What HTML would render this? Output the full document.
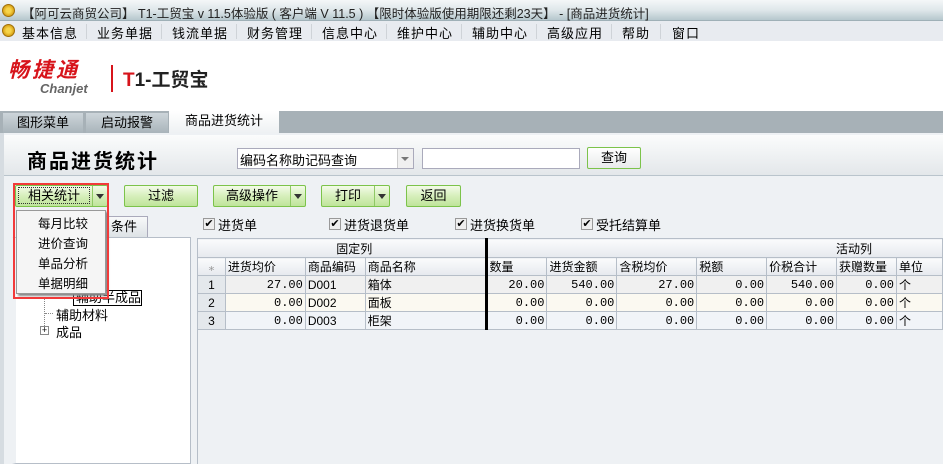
<!DOCTYPE html>
<html><head><meta charset="utf-8"><style>
*{margin:0;padding:0;box-sizing:border-box}
body{width:943px;height:464px;overflow:hidden;position:relative;background:#fff;font-family:"Liberation Sans","Noto Sans CJK SC",sans-serif;font-size:12px;color:#000}
.a{position:absolute;white-space:nowrap}
.coin{position:absolute;width:13px;height:13px;border-radius:50%;background:radial-gradient(circle,#f6d44a 30%,#d9a318 70%,#b07a10);border:1px solid #a0700a}
.btn{position:absolute;height:22px;border:1px solid #7cc34a;border-radius:2px;background:linear-gradient(#f3fbe9,#d6efbb 50%,#bfe49a);text-align:center;line-height:20px;font-size:13px}
.dd{position:absolute;top:0;right:0;width:15px;height:20px;border-left:1px solid #8fc865}
.dd:after{content:"";position:absolute;left:3px;top:8px;border:4px solid transparent;border-top:5px solid #333}
.cb{position:absolute;width:12px;height:12px;border:1px solid #999;background:#eee;font-size:11px;line-height:10px;text-align:center}
.m{position:absolute;top:23px;font-size:13px;letter-spacing:1px}
.s{position:absolute;top:24px;width:1px;height:15px;background:#cfd3d8}
table{border-collapse:collapse;position:absolute;left:197px;top:238px;table-layout:fixed}
td{border:1px solid #b6bec8;height:17px;padding:0 2px;font-size:12px;white-space:nowrap;overflow:hidden}
.h td{background:linear-gradient(#fafbfc,#e6e9ee)}
.n{text-align:right;font-family:"Liberation Mono",monospace;font-size:12px}
</style></head><body>
<div class="a" style="left:0;top:0;width:943px;height:21px;background:linear-gradient(#f4f7f8,#dfe7ea 50%,#b6c7cd);border-bottom:1px solid #9fb0b7"></div>
<div class="coin" style="left:2px;top:4px"></div>
<div class="a" style="left:22px;top:3px;font-size:12.5px;color:#222">【阿可云商贸公司】 T1-工贸宝 v 11.5体验版 ( 客户端 V 11.5 ) 【限时体验版使用期限还剩23天】 - [商品进货统计]</div>
<div class="a" style="left:0;top:21px;width:943px;height:20px;background:#e8ebf0"></div>
<div class="coin" style="left:2px;top:24px"></div>
<div class="m" style="left:22px">基本信息</div><div class="s" style="left:86px"></div>
<div class="m" style="left:97px">业务单据</div><div class="s" style="left:161px"></div>
<div class="m" style="left:172px">钱流单据</div><div class="s" style="left:236px"></div>
<div class="m" style="left:247px">财务管理</div><div class="s" style="left:311px"></div>
<div class="m" style="left:322px">信息中心</div><div class="s" style="left:386px"></div>
<div class="m" style="left:397px">维护中心</div><div class="s" style="left:461px"></div>
<div class="m" style="left:472px">辅助中心</div><div class="s" style="left:536px"></div>
<div class="m" style="left:547px">高级应用</div><div class="s" style="left:611px"></div>
<div class="m" style="left:622px">帮助</div><div class="s" style="left:660px"></div>
<div class="m" style="left:672px">窗口</div>
<div class="a" style="left:8px;top:60px;font-size:21px;line-height:22px;font-weight:bold;font-style:italic;color:#d7141b;letter-spacing:3px">畅捷通</div>
<div class="a" style="left:40px;top:82px;font-size:13px;line-height:14px;font-style:italic;font-weight:bold;color:#666">Chanjet</div>
<div class="a" style="left:111px;top:65px;width:2px;height:27px;background:#d7141b"></div>
<div class="a" style="left:123px;top:65px;font-size:19px;font-weight:bold;color:#222"><span style="color:#d7141b">T</span>1-工贸宝</div>
<div class="a" style="left:0;top:111px;width:943px;height:22px;background:#a7b1b7"></div>
<div class="a" style="left:3px;top:113px;width:80px;height:20px;background:linear-gradient(#cdd5da,#a9b4ba);text-align:center;line-height:20px;font-size:13px">图形菜单</div>
<div class="a" style="left:86px;top:113px;width:82px;height:20px;background:linear-gradient(#cdd5da,#a9b4ba);text-align:center;line-height:20px;font-size:13px">启动报警</div>
<div class="a" style="left:169px;top:111px;width:110px;height:22px;background:linear-gradient(#fff,#eef1f3);text-align:center;line-height:20px;font-size:13px">商品进货统计</div>
<div class="a" style="left:0;top:133px;width:943px;height:331px;background:#eef1f4;border-left:4px solid #d6dce1"></div>
<div class="a" style="left:4px;top:135px;width:939px;height:41px;background:linear-gradient(#fbfcfc,#e3e7ea);border-bottom:1px solid #b9c4cc"></div>
<div class="a" style="left:27px;top:145px;font-size:20px;font-weight:bold;letter-spacing:2px">商品进货统计</div>
<div class="a" style="left:237px;top:148px;width:177px;height:21px;background:#fff;border:1px solid #aab"></div>
<div class="a" style="left:240px;top:150px;font-size:13px">编码名称助记码查询</div>
<div class="a" style="left:397px;top:149px;width:16px;height:19px;background:#f0f0f0;border-left:1px solid #ccc"></div>
<div class="a" style="left:401px;top:157px;border:4px solid transparent;border-top:4px solid #777"></div>
<div class="a" style="left:422px;top:148px;width:158px;height:21px;background:#fff;border:1px solid #aab"></div>
<div class="btn" style="left:587px;top:147px;width:54px;background:linear-gradient(#fff,#e8eaeb);line-height:20px;font-size:13px">查询</div>
<div class="btn" style="left:15px;top:185px;width:93px;padding-right:15px"><span style="border:1px dotted #333;padding:0 9px">相关统计</span><div class="dd"></div></div>
<div class="btn" style="left:124px;top:185px;width:74px">过滤</div>
<div class="btn" style="left:213px;top:185px;width:93px;padding-right:15px">高级操作<div class="dd"></div></div>
<div class="btn" style="left:321px;top:185px;width:69px;padding-right:15px">打印<div class="dd"></div></div>
<div class="btn" style="left:406px;top:185px;width:55px">返回</div>
<div class="cb" style="left:203px;top:218px">✔</div><div class="a" style="left:218px;top:215px;font-size:13px">进货单</div>
<div class="cb" style="left:329px;top:218px">✔</div><div class="a" style="left:344px;top:215px;font-size:13px">进货退货单</div>
<div class="cb" style="left:455px;top:218px">✔</div><div class="a" style="left:470px;top:215px;font-size:13px">进货换货单</div>
<div class="cb" style="left:581px;top:218px">✔</div><div class="a" style="left:596px;top:215px;font-size:13px">受托结算单</div>
<div class="a" style="left:100px;top:216px;width:48px;height:22px;background:linear-gradient(#f8f9fa,#dde2e6);border:1px solid #aab;font-size:13px;line-height:20px;padding-left:10px">条件</div>
<div class="a" style="left:12px;top:237px;width:179px;height:227px;background:#fff;border:1px solid #b6bec8;border-left:4px solid #eef1f4"></div>
<div class="a" style="left:73px;top:290px;width:69px;height:16px;border:1px solid #000;font-size:13px;line-height:14px;padding-left:2px">辅助半成品</div>
<div class="a" style="left:44px;top:298px;width:1px;height:30px;border-left:1px dotted #888"></div>
<div class="a" style="left:45px;top:313px;width:8px;border-top:1px dotted #888"></div>
<div class="a" style="left:56px;top:305px;font-size:13px">辅助材料</div>
<div class="a" style="left:40px;top:326px;width:9px;height:9px;border:1px solid #888;font-size:9px;line-height:7px;text-align:center">+</div>
<div class="a" style="left:56px;top:322px;font-size:13px">成品</div>
<div class="a" style="left:16px;top:210px;width:90px;height:84px;background:#f5f5f5;border:1px solid #999;box-shadow:2px 2px 2px #888"></div>
<div class="a" style="left:38px;top:214px;font-size:12.5px;line-height:20px">每月比较<br>进价查询<br>单品分析<br>单据明细</div>
<div class="a" style="left:13px;top:183px;width:96px;height:116px;border:2px solid #f23a3a"></div>
<div class="a" style="left:197px;top:238px;width:746px;height:226px;background:#eef1f4;border-left:1px solid #b6bec8"></div>
<table>
<colgroup><col style="width:28px"><col style="width:80px"><col style="width:60px"><col style="width:121px"><col style="width:61px"><col style="width:70px"><col style="width:80px"><col style="width:70px"><col style="width:70px"><col style="width:60px"><col style="width:46px"></colgroup>
<tr class="h" style="height:19px"><td colspan="4" style="text-align:center;padding-left:28px">固定列</td><td colspan="7" style="text-align:right;padding-right:70px;border-left:3px solid #000">活动列</td></tr>
<tr class="h" style="height:18px"><td style="text-align:center;color:#999">⁎</td><td>进货均价</td><td>商品编码</td><td>商品名称</td><td style="border-left:3px solid #000">数量</td><td>进货金额</td><td>含税均价</td><td>税额</td><td>价税合计</td><td>获赠数量</td><td>单位</td></tr>
<tr style="background:#f0f0f0"><td style="text-align:center;background:#e4e8ec">1</td><td class="n">27.00</td><td>D001</td><td>箱体</td><td class="n" style="border-left:3px solid #000">20.00</td><td class="n">540.00</td><td class="n">27.00</td><td class="n">0.00</td><td class="n">540.00</td><td class="n">0.00</td><td>个</td></tr>
<tr style="background:#fbf9f1"><td style="text-align:center;background:#e4e8ec">2</td><td class="n">0.00</td><td>D002</td><td>面板</td><td class="n" style="border-left:3px solid #000">0.00</td><td class="n">0.00</td><td class="n">0.00</td><td class="n">0.00</td><td class="n">0.00</td><td class="n">0.00</td><td>个</td></tr>
<tr style="background:#f1f4f8"><td style="text-align:center;background:#e4e8ec">3</td><td class="n">0.00</td><td>D003</td><td>柜架</td><td class="n" style="border-left:3px solid #000">0.00</td><td class="n">0.00</td><td class="n">0.00</td><td class="n">0.00</td><td class="n">0.00</td><td class="n">0.00</td><td>个</td></tr>
</table>
</body></html>
